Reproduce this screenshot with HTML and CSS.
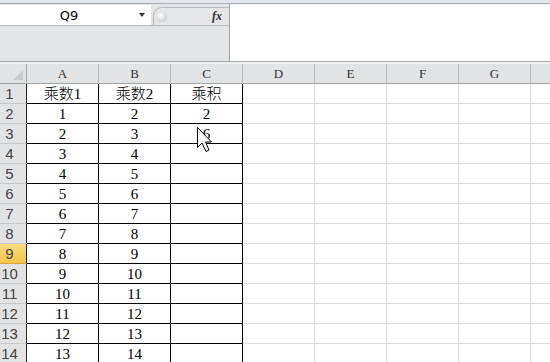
FILE: index.html
```html
<!DOCTYPE html>
<html>
<head>
<meta charset="utf-8">
<link rel="stylesheet" href="styles.css">
</head>
<body>
<div class="app">
  <div class="ribbon-edge"></div>
  <div class="formula-row">
    <div class="left">
      <div class="namebox-row">
        <div class="namebox"><span class="ref">Q9</span><i class="caret"></i></div>
        <div class="fx-group"><span class="knob"></span><span class="fx">fx</span></div>
      </div>
    </div>
    <div class="formula-input"></div>
  </div>
  <div class="sep"></div>
  <div class="sheet">
    <div class="corner"><i class="tri"></i></div>
    <div class="ch">A</div><div class="ch">B</div><div class="ch">C</div><div class="ch">D</div><div class="ch">E</div><div class="ch">F</div><div class="ch">G</div><div class="ch last"></div>

    <div class="rh">1</div><div class="c b">乘数1</div><div class="c b">乘数2</div><div class="c b">乘积</div><div class="c"></div><div class="c"></div><div class="c"></div><div class="c"></div><div class="c"></div>
    <div class="rh">2</div><div class="c b">1</div><div class="c b">2</div><div class="c b">2</div><div class="c"></div><div class="c"></div><div class="c"></div><div class="c"></div><div class="c"></div>
    <div class="rh">3</div><div class="c b">2</div><div class="c b">3</div><div class="c b">6</div><div class="c"></div><div class="c"></div><div class="c"></div><div class="c"></div><div class="c"></div>
    <div class="rh">4</div><div class="c b">3</div><div class="c b">4</div><div class="c b"></div><div class="c"></div><div class="c"></div><div class="c"></div><div class="c"></div><div class="c"></div>
    <div class="rh">5</div><div class="c b">4</div><div class="c b">5</div><div class="c b"></div><div class="c"></div><div class="c"></div><div class="c"></div><div class="c"></div><div class="c"></div>
    <div class="rh">6</div><div class="c b">5</div><div class="c b">6</div><div class="c b"></div><div class="c"></div><div class="c"></div><div class="c"></div><div class="c"></div><div class="c"></div>
    <div class="rh">7</div><div class="c b">6</div><div class="c b">7</div><div class="c b"></div><div class="c"></div><div class="c"></div><div class="c"></div><div class="c"></div><div class="c"></div>
    <div class="rh">8</div><div class="c b">7</div><div class="c b">8</div><div class="c b"></div><div class="c"></div><div class="c"></div><div class="c"></div><div class="c"></div><div class="c"></div>
    <div class="rh sel">9</div><div class="c b">8</div><div class="c b">9</div><div class="c b"></div><div class="c"></div><div class="c"></div><div class="c"></div><div class="c"></div><div class="c"></div>
    <div class="rh">10</div><div class="c b">9</div><div class="c b">10</div><div class="c b"></div><div class="c"></div><div class="c"></div><div class="c"></div><div class="c"></div><div class="c"></div>
    <div class="rh">11</div><div class="c b">10</div><div class="c b">11</div><div class="c b"></div><div class="c"></div><div class="c"></div><div class="c"></div><div class="c"></div><div class="c"></div>
    <div class="rh">12</div><div class="c b">11</div><div class="c b">12</div><div class="c b"></div><div class="c"></div><div class="c"></div><div class="c"></div><div class="c"></div><div class="c"></div>
    <div class="rh">13</div><div class="c b">12</div><div class="c b">13</div><div class="c b"></div><div class="c"></div><div class="c"></div><div class="c"></div><div class="c"></div><div class="c"></div>
    <div class="rh">14</div><div class="c b">13</div><div class="c b">14</div><div class="c b"></div><div class="c"></div><div class="c"></div><div class="c"></div><div class="c"></div><div class="c"></div>
  </div>
  <svg class="pointer" width="16" height="26" viewBox="0 0 16 26">
    <path d="M0.5 0.5 L0.5 20.5 L5 16 L9 24.5 L12 23 L8.5 15 L14.5 15 Z" fill="#fff" stroke="#000" stroke-width="1" stroke-linejoin="miter"/>
  </svg>
</div>
</body>
</html>
```

FILE: styles.css
```css
html, body {
  margin: 0;
  padding: 0;
  background: #ffffff;
  overflow: hidden;
}
.app {
  position: relative;
  width: 550px;
  height: 362px;
  overflow: hidden;
  font-family: "Liberation Sans", sans-serif;
}
.ribbon-edge {
  height: 3px;
  background: #e2e5e9;
  border-bottom: 1px solid #a7adb5;
}
.formula-row {
  display: flex;
  height: 57px;
  background: #eceef0;
}
.left {
  width: 229px;
  border-right: 1px solid #a3a7ac;
  background: #e4e5e7;
}
.namebox-row {
  display: flex;
  height: 21px;
  margin-top: 1px;
  border-bottom: 1px solid #b9bcc0;
  box-sizing: border-box;
}
.namebox {
  width: 151px;
  background: #fff;
  display: flex;
  align-items: center;
  position: relative;
}
.ref {
  width: 138px;
  text-align: center;
  font-family: "DejaVu Sans", sans-serif;
  font-size: 13px;
  color: #000;
}
.caret {
  width: 0;
  height: 0;
  border-left: 3px solid transparent;
  border-right: 3px solid transparent;
  border-top: 4px solid #333;
  margin-left: 1px;
}
.fx-group {
  margin-left: 2px;
  margin-top: 2px;
  flex: 1;
  height: 17px;
  border: 1px solid #b4b8bd;
  border-right: none;
  border-bottom: none;
  border-radius: 9px 0 0 0;
  background: #e4e6e9;
  display: flex;
  align-items: center;
  justify-content: space-between;
}
.knob {
  width: 11px;
  height: 11px;
  margin-left: 2px;
  border-radius: 50%;
  background: radial-gradient(circle at 40% 40%, #ffffff 0%, #d6d8db 60%, #b9bcc0 100%);
}
.fx {
  font-family: "Liberation Serif", serif;
  font-style: italic;
  font-weight: bold;
  font-size: 12px;
  color: #333;
  margin-right: 7px;
}
.formula-input {
  flex: 1;
  background: #fff;
  margin-top: 1px;
}
.sep {
  height: 2px;
  border-top: 1px solid #a4a8ad;
  background: #eef0f2;
}
.sheet {
  display: grid;
  grid-template-columns: 27px repeat(7, 72px) 20px;
  grid-auto-rows: 20px;
}
.sheet > div {
  box-sizing: border-box;
}
.corner {
  background: #e2e3e5;
  border-right: 1px solid #a9acb0;
  border-bottom: 1px solid #a0a3a7;
  position: relative;
}
.tri {
  position: absolute;
  right: 3px;
  bottom: 3px;
  width: 0;
  height: 0;
  border-left: 10px solid transparent;
  border-bottom: 10px solid #c9cbce;
}
.ch {
  background: #e2e3e5;
  border-right: 1px solid #b3b6ba;
  border-bottom: 1px solid #a0a3a7;
  text-align: center;
  font-family: "Liberation Serif", serif;
  font-size: 13px;
  line-height: 20px;
  color: #333;
}
.rh {
  background: #e2e3e5;
  border-right: 1px solid #222;
  border-bottom: 1px solid #c6c8cc;
  font-family: "Liberation Sans", sans-serif;
  font-size: 15px;
  line-height: 20px;
  color: #444;
  text-align: center;
  padding-right: 7px;
}
.rh.sel {
  background: linear-gradient(#f9dc80, #f2c44e);
  border-bottom-color: #d9a93f;
  color: #444;
}
.c {
  border-right: 1px solid #dadcdd;
  border-bottom: 1px solid #dadcdd;
  text-align: center;
  font-family: "Liberation Serif", "Noto Sans CJK SC", serif;
  font-weight: 300;
  font-size: 15px;
  line-height: 20px;
  color: #000;
}
.c.b {
  border-right-color: #000;
  border-bottom-color: #000;
}
.pointer {
  position: absolute;
  left: 197px;
  top: 127px;
}
```
